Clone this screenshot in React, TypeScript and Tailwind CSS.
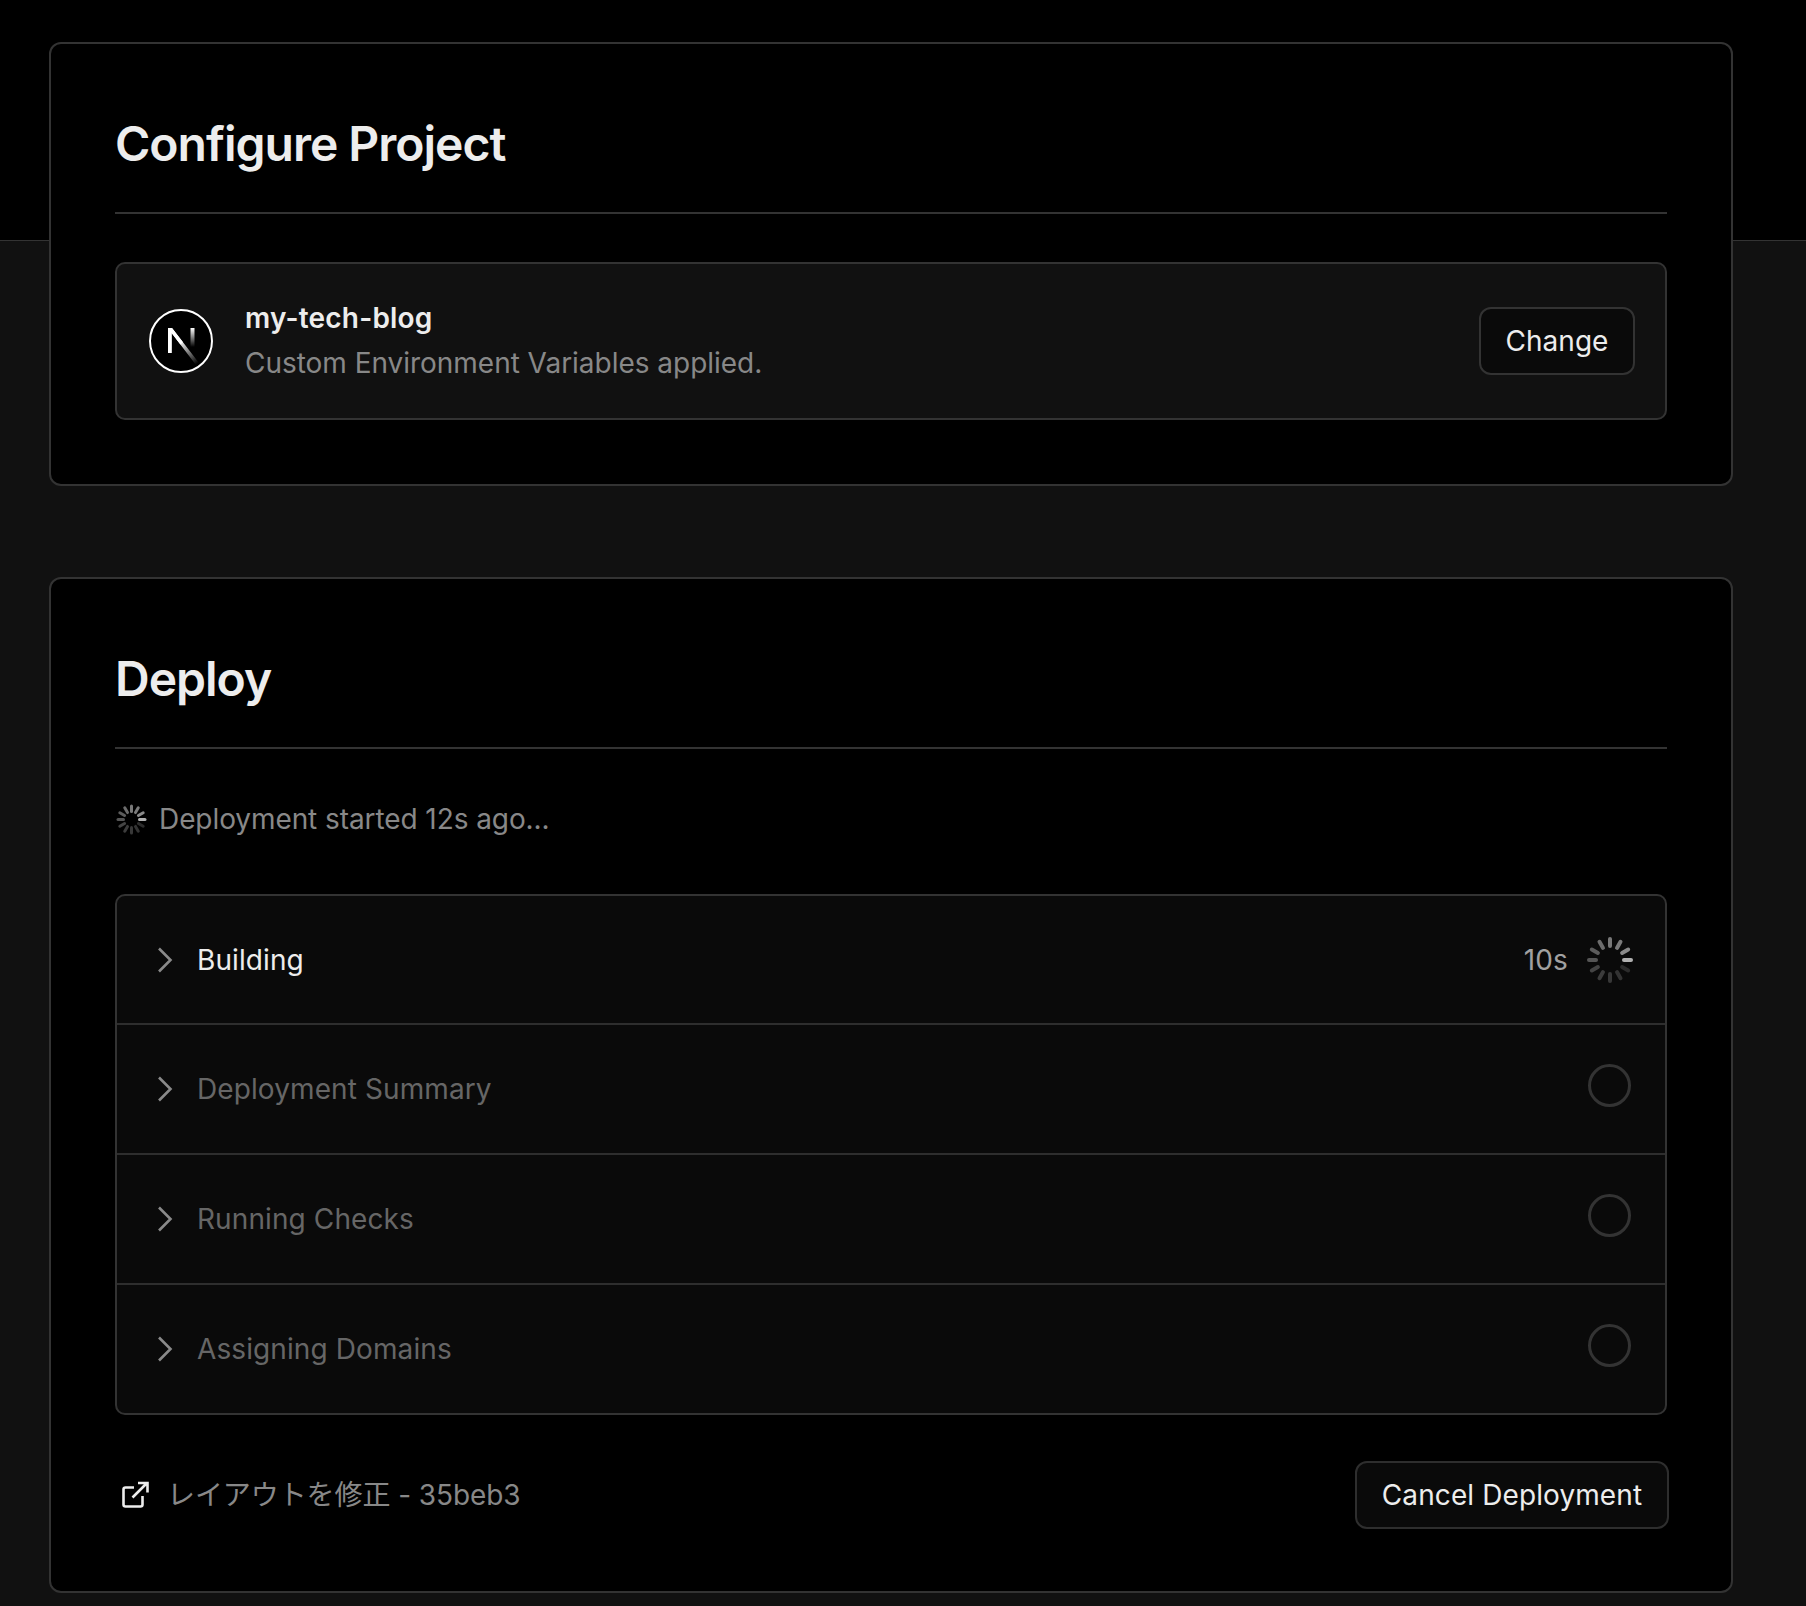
import React from "react";

const font = { fontFamily: "Inter, 'Noto Sans CJK JP', sans-serif" };

function Spinner({ size, outer, inner, width }: { size: number; outer: number; inner: number; width: number }) {
  const colors = ["#b0b0b0", "#8a8a8a", "#7a7a7a", "#787878", "#6c6c6c", "#5c5c5c", "#555555", "#444444", "#3c3c3c", "#383838", "#333333", "#2c2c2c"];
  return (
    <svg width={size} height={size} viewBox={`${-size / 2} ${-size / 2} ${size} ${size}`} className="shrink-0">
      {colors.map((c, i) => {
        const a = (-i * 30 * Math.PI) / 180;
        return (
          <line
            key={i}
            x1={Math.cos(a) * inner}
            y1={Math.sin(a) * inner}
            x2={Math.cos(a) * outer}
            y2={Math.sin(a) * outer}
            stroke={c}
            strokeWidth={width}
            strokeLinecap="round"
          />
        );
      })}
    </svg>
  );
}

function Chevron() {
  return (
    <svg width="16" height="26" viewBox="0 0 16 26" fill="none" className="shrink-0">
      <path d="M2 1.5 L13.5 13 L2 24.5" stroke="#8a8a8a" strokeWidth="2.6" />
    </svg>
  );
}

function NextLogo() {
  return (
    <svg width="64" height="64" viewBox="0 0 64 64" className="shrink-0">
      <defs>
        <linearGradient id="n1" x1="30" y1="32" x2="48" y2="55" gradientUnits="userSpaceOnUse">
          <stop offset="0" stopColor="#fff" />
          <stop offset="1" stopColor="#fff" stopOpacity="0" />
        </linearGradient>
        <linearGradient id="n2" x1="0" y1="0" x2="0" y2="1">
          <stop offset="0" stopColor="#fff" />
          <stop offset="1" stopColor="#fff" stopOpacity="0" />
        </linearGradient>
      </defs>
      <circle cx="32" cy="32" r="31" fill="#000" stroke="#fff" strokeWidth="2" />
      <path d="M19 19 H23 L50 54 L47 56 L22.6 24 V44 H19 Z" fill="url(#n1)" />
      <path d="M19 19 H23 L34 33.3 L31.4 35.5 L22.6 24 V44 H19 Z" fill="#fff" />
      <rect x="41.5" y="19" width="4" height="19" fill="url(#n2)" />
    </svg>
  );
}

function ExternalIcon() {
  return (
    <svg width="28" height="28" viewBox="0 0 28 28" fill="none" className="shrink-0">
      <path
        d="M13 6.5 H4.5 A2 2 0 0 0 2.5 8.5 V23.5 A2 2 0 0 0 4.5 25.5 H19.5 A2 2 0 0 0 21.5 23.5 V15"
        stroke="#ededed"
        strokeWidth="2.6"
      />
      <path d="M11.5 16.5 L26 2 M17 2 H26.5 V11.5" stroke="#ededed" strokeWidth="2.6" />
    </svg>
  );
}

function Row({ label, first }: { label: string; first?: boolean }) {
  return (
    <div className={`flex items-center pl-[40px] pr-[31px] ${first ? "h-[127px]" : "h-[130px] border-t-2 border-[#2e2e2e]"}`}>
      <Chevron />
      <span className={`ml-[24px] text-[28px] leading-none ${first ? "text-[#ededed]" : "text-[#666666]"} tracking-[0.1px]`}>
        {label}
      </span>
      <div className="ml-auto flex items-center">
        {first ? (
          <>
            <span className="mr-[18px] text-[28px] tracking-[0.1px] text-[#a1a1a1]">10s</span>
            <Spinner size={48} outer={21} inner={14} width={4} />
          </>
        ) : (
          <div className="mb-[7px] mr-[3px] h-[43px] w-[43px] rounded-full border-[3px] border-[#333333]" />
        )}
      </div>
    </div>
  );
}

function Card({ title, children, className }: { title: string; children: React.ReactNode; className?: string }) {
  return (
    <section className={`rounded-[12px] border-2 border-[#333333] bg-black px-[64px] pt-[64px] ${className ?? ""}`}>
      <h2 className="h-[72px] text-[48px] leading-[72px] font-semibold tracking-[-1px] text-[#ededed]">{title}</h2>
      <div className="mt-[32px] h-[2px] bg-[#333333]" />
      {children}
    </section>
  );
}

export default function App() {
  return (
    <div
      style={font}
      className="h-[1606px] w-[1806px] overflow-hidden bg-[#111111] bg-[linear-gradient(#000_0,#000_240px,#333_240px,#333_241px,transparent_241px)] pl-[49px] pr-[73px] pt-[42px]"
    >
      <Card title="Configure Project" className="pb-[64px]">
        <div className="mt-[48px] flex h-[158px] items-center rounded-[10px] border-2 border-[#333333] bg-[#111111] pl-[32px] pr-[30px]">
          <NextLogo />
          <div className="ml-[32px] pb-[2px]">
            <div className="text-[28px] leading-[40px] font-semibold tracking-[0.2px] text-[#ededed]">my-tech-blog</div>
            <div className="mt-[5px] text-[28px] leading-[40px] tracking-[-0.03px] text-[#888888]">Custom Environment Variables applied.</div>
          </div>
          <button className="ml-auto flex h-[68px] w-[156px] items-center justify-center rounded-[12px] border-2 border-[#333333] bg-[#0a0a0a] text-[28px] text-[#ededed]">
            Change
          </button>
        </div>
      </Card>
      <Card title="Deploy" className="mt-[91px] pb-[62px]">
        <div className="mt-[50px] flex h-[40px] items-center gap-[11px] text-[28px] tracking-[-0.08px] text-[#888888]">
          <Spinner size={33} outer={13.5} inner={8} width={3} />
          <span>Deployment started 12s ago...</span>
        </div>
        <div className="mt-[55px] overflow-hidden rounded-[10px] border-2 border-[#333333] bg-[#0a0a0a]">
          <Row label="Building" first />
          <Row label="Deployment Summary" />
          <Row label="Running Checks" />
          <Row label="Assigning Domains" />
        </div>
        <div className="mt-[46px] flex items-center justify-between">
          <div className="flex items-center pl-[6px]">
            <ExternalIcon />
            <span className="ml-[18px] text-[28px] tracking-[-0.08px] text-[#888888]">レイアウトを修正 - 35beb3</span>
          </div>
          <button className="-mr-[2px] flex h-[68px] w-[314px] items-center justify-center rounded-[12px] border-2 border-[#2e2e2e] bg-[#0a0a0a] text-[28px] tracking-[0.1px] text-[#ededed]">
            Cancel Deployment
          </button>
        </div>
      </Card>
    </div>
  );
}
